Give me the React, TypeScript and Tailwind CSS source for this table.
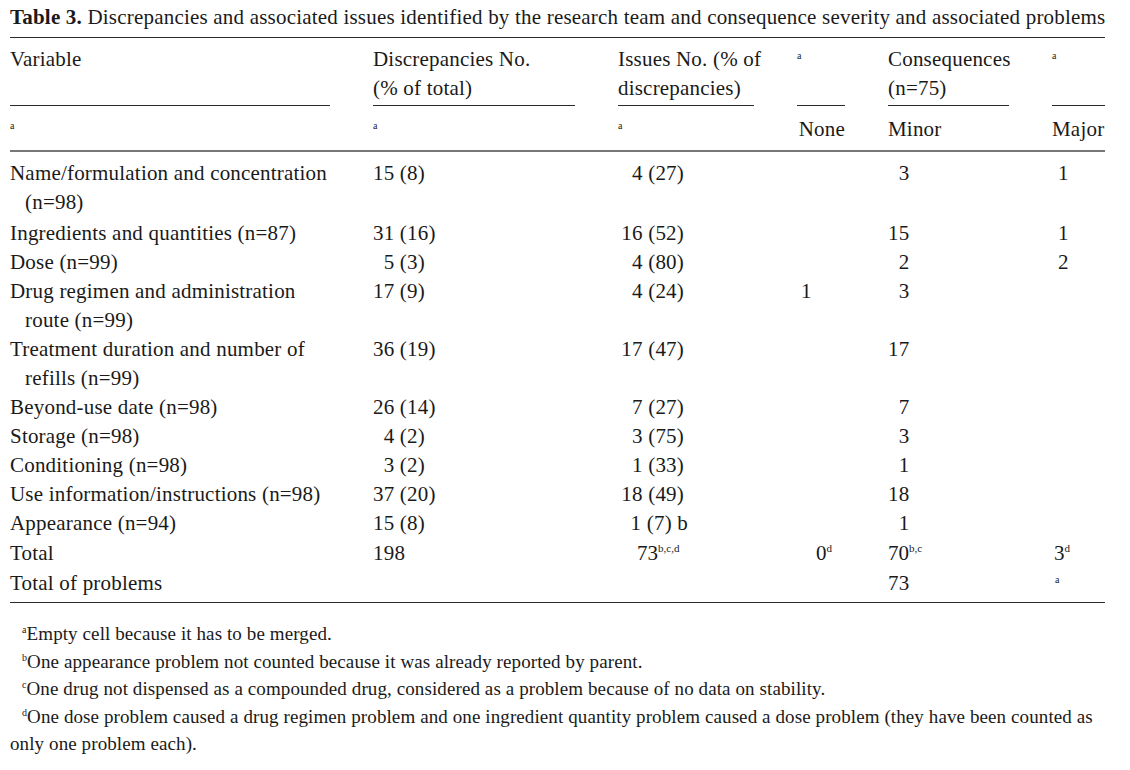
const serif = "font-['Liberation_Serif','Times_New_Roman',serif]";

type Row = {
  label: string[];
  disc?: string;
  issues?: React.ReactNode;
  none?: React.ReactNode;
  minor?: React.ReactNode;
  major?: React.ReactNode;
};

const F = "\u2007";

const Sup = ({ children }: { children: React.ReactNode }) => (
  <span className="text-[11px] relative -top-[8px] leading-none tracking-normal">{children}</span>
);

const FootSup = ({ children }: { children: React.ReactNode }) => (
  <span className="text-[10px] relative -top-[7px] leading-none">{children}</span>
);

const Note = () => <span className="text-[10px] relative -top-[7px] leading-none">a</span>;

const rows: Row[] = [
  { label: ["Name/formulation and concentration", "(n=98)"], disc: "15 (8)", issues: "4 (27)", minor: F + "3", major: "1" },
  { label: ["Ingredients and quantities (n=87)"], disc: "31 (16)", issues: "16 (52)", minor: "15", major: "1" },
  { label: ["Dose (n=99)"], disc: F + "5 (3)", issues: "4 (80)", minor: F + "2", major: "2" },
  { label: ["Drug regimen and administration", "route (n=99)"], disc: "17 (9)", issues: "4 (24)", none: "1", minor: F + "3" },
  { label: ["Treatment duration and number of", "refills (n=99)"], disc: "36 (19)", issues: "17 (47)", minor: "17" },
  { label: ["Beyond-use date (n=98)"], disc: "26 (14)", issues: "7 (27)", minor: F + "7" },
  { label: ["Storage (n=98)"], disc: F + "4 (2)", issues: "3 (75)", minor: F + "3" },
  { label: ["Conditioning (n=98)"], disc: F + "3 (2)", issues: "1 (33)", minor: F + "1" },
  { label: ["Use information/instructions (n=98)"], disc: "37 (20)", issues: "18 (49)", minor: "18" },
  { label: ["Appearance (n=94)"], disc: "15 (8)", issues: <span className="relative left-[4px]">1 (7) b</span>, minor: F + "1" },
];

const cols = "grid grid-cols-[363px_245px_179px_91px_164px_53px]";

function HeadCell({ children, last }: { children?: React.ReactNode; last?: boolean }) {
  return (
    <div className={`h-[61px] whitespace-nowrap border-b border-[#2a2a2a] ${last ? "" : "mr-[43px]"}`}>
      {children}
    </div>
  );
}

export default function App() {
  return (
    <div className={`${serif} text-[#1a1a1a] bg-white w-[1130px] h-[770px] px-[10px] pt-[5px] tracking-[0.2px]`}>
      <p className="text-[21px] leading-[24px] whitespace-nowrap tracking-[0.2px]">
        <span className="font-bold">Table 3.</span>
        {"  "}Discrepancies and associated issues identified by the research team and consequence severity and associated problems
      </p>

      <div className="mt-[8px] w-[1095px] border-t border-[#2a2a2a] text-[21px] leading-[29px]">
        <div className={`${cols} pt-[7px]`}>
          <HeadCell>Variable</HeadCell>
          <HeadCell>
            Discrepancies No.
            <br />
            (% of total)
          </HeadCell>
          <HeadCell>
            Issues No. (% of
            <br />
            discrepancies)
          </HeadCell>
          <HeadCell>
            <Note />
          </HeadCell>
          <HeadCell>
            Consequences
            <br />
            (n=75)
          </HeadCell>
          <HeadCell last>
            <Note />
          </HeadCell>
        </div>

        <div className={`${cols} pt-[9px] pb-[6px] border-b-2 border-[#777]`}>
          <div><Note /></div>
          <div><Note /></div>
          <div><Note /></div>
          <div className="w-[48px] text-right">None</div>
          <div>Minor</div>
          <div>Major</div>
        </div>

        <div className="pt-[7px] pb-[4px] border-b border-[#2a2a2a]">
          {rows.map((r, i) => (
            <div key={i} className={`${cols} ${i === 0 ? "pb-[2px]" : ""}`}>
              <div className="whitespace-nowrap">
                {r.label[0]}
                {r.label[1] && <div className="pl-[15px]">{r.label[1]}</div>}
              </div>
              <div className="whitespace-pre">{r.disc}</div>
              <div className="w-[66px] text-right whitespace-pre">{r.issues}</div>
              <div className="pl-[4px]">{r.none}</div>
              <div className="whitespace-pre">{r.minor}</div>
              <div className="pl-[6px]">{r.major}</div>
            </div>
          ))}
          <div className={`${cols} pt-[1px] pb-[1px]`}>
            <div>Total</div>
            <div>198</div>
            <div className="pl-[19px] tracking-normal">
              73<Sup>b,c,d</Sup>
            </div>
            <div className="pl-[19px] tracking-normal">
              0<Sup>d</Sup>
            </div>
            <div className="tracking-normal">
              70<Sup>b,c</Sup>
            </div>
            <div className="pl-[2px] tracking-normal">
              3<Sup>d</Sup>
            </div>
          </div>
          <div className={cols}>
            <div>Total of problems</div>
            <div />
            <div />
            <div />
            <div>73</div>
            <div className="pl-[3px]">
              <Note />
            </div>
          </div>
        </div>
      </div>

      <div className="mt-[17px] w-[1095px] text-[19px] leading-[27.5px] tracking-[0.1px]">
        <p className="pl-[12px]">
          <FootSup>a</FootSup>Empty cell because it has to be merged.
        </p>
        <p className="pl-[12px]">
          <FootSup>b</FootSup>One appearance problem not counted because it was already reported by parent.
        </p>
        <p className="pl-[12px]">
          <FootSup>c</FootSup>One drug not dispensed as a compounded drug, considered as a problem because of no data on stability.
        </p>
        <p>
          <span className="whitespace-nowrap pl-[12px]">
            <FootSup>d</FootSup>One dose problem caused a drug regimen problem and one ingredient quantity problem caused a dose problem (they have been counted as
          </span>
          <br />
          only one problem each).
        </p>
      </div>
    </div>
  );
}
